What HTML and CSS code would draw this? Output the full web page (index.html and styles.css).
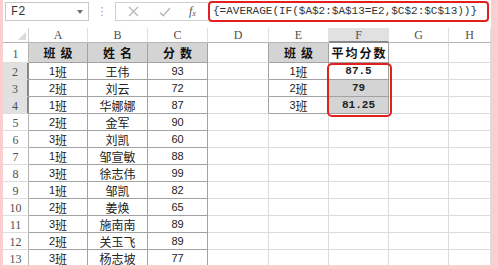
FILE: index.html
```html
<!DOCTYPE html>
<html lang="zh">
<head>
<meta charset="utf-8">
<title>AVERAGE IF</title>
<link rel="stylesheet" href="styles.css">
</head>
<body>
<div class="frame">
  <div class="app">
    <div class="fbar">
      <div class="namebox"><span class="nb-text">F2</span><span class="nb-arrow"></span></div>
      <div class="dots">⋮</div>
      <div class="btns">
        <svg class="ic" width="11" height="11" viewBox="0 0 11 11"><path d="M1 1L10 10M10 1L1 10" stroke="#b4b4b4" stroke-width="1.2" fill="none"/></svg>
        <svg class="ic" width="12" height="10" viewBox="0 0 12 10"><path d="M1 5.5L4.2 8.8L11 1" stroke="#b4b4b4" stroke-width="1.3" fill="none"/></svg>
        <span class="fx">f<sub>x</sub></span>
      </div>
      <div class="formula">{=AVERAGE(IF($A$2:$A$13=E2,$C$2:$C$13))}</div>
    </div>
    <div class="sheet">
      <div class="grid">
        <div class="c corner"><span class="tri"></span></div>
        <div class="c ch">A</div><div class="c ch">B</div><div class="c ch">C</div><div class="c ch">D</div><div class="c ch">E</div><div class="c ch selc">F</div><div class="c ch">G</div><div class="c ch">H</div>

        <div class="c rh r1">1</div>
        <div class="c t th">班级</div><div class="c t th">姓名</div><div class="c t th">分数</div><div class="c tl"></div><div class="c t th">班级</div><div class="c t th th4">平均分数</div><div class="c"></div><div class="c"></div>

        <div class="c rh selr">2</div>
        <div class="c t cls"><span class="d">1</span>班</div><div class="c t nm">王伟</div><div class="c t num">93</div><div class="c tl"></div><div class="c t cls"><span class="d">1</span>班</div><div class="c t res">87.5</div><div class="c"></div><div class="c"></div>

        <div class="c rh selr">3</div>
        <div class="c t cls"><span class="d">2</span>班</div><div class="c t nm">刘云</div><div class="c t num">72</div><div class="c tl"></div><div class="c t cls"><span class="d">2</span>班</div><div class="c t res hl">79</div><div class="c"></div><div class="c"></div>

        <div class="c rh selr">4</div>
        <div class="c t cls"><span class="d">1</span>班</div><div class="c t nm">华娜娜</div><div class="c t num">87</div><div class="c tl"></div><div class="c t cls"><span class="d">3</span>班</div><div class="c t res hl">81.25</div><div class="c"></div><div class="c"></div>

        <div class="c rh">5</div>
        <div class="c t cls"><span class="d">2</span>班</div><div class="c t nm">金军</div><div class="c t num">90</div><div class="c"></div><div class="c"></div><div class="c"></div><div class="c"></div><div class="c"></div>

        <div class="c rh">6</div>
        <div class="c t cls"><span class="d">3</span>班</div><div class="c t nm">刘凯</div><div class="c t num">60</div><div class="c"></div><div class="c"></div><div class="c"></div><div class="c"></div><div class="c"></div>

        <div class="c rh">7</div>
        <div class="c t cls"><span class="d">1</span>班</div><div class="c t nm">邹宣敏</div><div class="c t num">88</div><div class="c"></div><div class="c"></div><div class="c"></div><div class="c"></div><div class="c"></div>

        <div class="c rh">8</div>
        <div class="c t cls"><span class="d">3</span>班</div><div class="c t nm">徐志伟</div><div class="c t num">99</div><div class="c"></div><div class="c"></div><div class="c"></div><div class="c"></div><div class="c"></div>

        <div class="c rh">9</div>
        <div class="c t cls"><span class="d">1</span>班</div><div class="c t nm">邹凯</div><div class="c t num">82</div><div class="c"></div><div class="c"></div><div class="c"></div><div class="c"></div><div class="c"></div>

        <div class="c rh">10</div>
        <div class="c t cls"><span class="d">2</span>班</div><div class="c t nm">姜焕</div><div class="c t num">65</div><div class="c"></div><div class="c"></div><div class="c"></div><div class="c"></div><div class="c"></div>

        <div class="c rh">11</div>
        <div class="c t cls"><span class="d">3</span>班</div><div class="c t nm">施南南</div><div class="c t num">89</div><div class="c"></div><div class="c"></div><div class="c"></div><div class="c"></div><div class="c"></div>

        <div class="c rh">12</div>
        <div class="c t cls"><span class="d">2</span>班</div><div class="c t nm">关玉飞</div><div class="c t num">89</div><div class="c"></div><div class="c"></div><div class="c"></div><div class="c"></div><div class="c"></div>

        <div class="c rh">13</div>
        <div class="c t cls"><span class="d">3</span>班</div><div class="c t nm">杨志坡</div><div class="c t num">77</div><div class="c"></div><div class="c"></div><div class="c"></div><div class="c"></div><div class="c"></div>
      </div>
      <div class="ring"></div>
    </div>
  </div>
</div>
</body>
</html>
```

FILE: styles.css
```css
* { box-sizing: border-box; }
html, body { margin: 0; padding: 0; background: #ffffff; }
body { width: 498px; height: 269px; overflow: hidden; }

.frame {
  width: 498px;
  height: 269px;
  background: #fbcfcf;
  padding: 0 7px 4px 3px;
}
.app {
  width: 488px;
  height: 265px;
  background: #ffffff;
  overflow: hidden;
}

/* formula bar */
.fbar {
  height: 28px;
  display: flex;
  align-items: flex-start;
  padding: 2px 0 0 2px;
}
.namebox {
  width: 84px;
  height: 19px;
  border: 1px solid #c8c8c8;
  display: flex;
  align-items: center;
  justify-content: space-between;
  padding: 0 5px 0 5px;
  font-family: "Liberation Mono", monospace;
  font-size: 12px;
  color: #333;
}
.nb-arrow {
  width: 0; height: 0;
  border-left: 3px solid transparent;
  border-right: 3px solid transparent;
  border-top: 4px solid #707070;
}
.dots {
  width: 26px;
  text-align: center;
  color: #9a9a9a;
  font-family: "DejaVu Sans", sans-serif;
  font-size: 11px;
  line-height: 19px;
}
.btns {
  width: 93px;
  height: 19px;
  border: 1px solid #d0d0d0;
  border-right: none;
  display: flex;
  align-items: center;
  padding-left: 12px;
  gap: 0;
}
.btns .ic:first-child { margin-right: 20px; }
.btns .ic:nth-child(2) { margin-right: 18px; }
.fx {
  font-family: "Liberation Serif", serif;
  font-style: italic;
  font-size: 12px;
  color: #555;
  line-height: 1;
}
.fx sub { font-size: 8px; vertical-align: -1px; }
.formula {
  width: 281px;
  height: 21px;
  margin-top: -1px;
  border: 2px solid #e2201f;
  border-radius: 4px;
  font-family: "Liberation Mono", monospace;
  font-size: 11px;
  color: #333;
  line-height: 17px;
  padding-left: 3px;
  white-space: nowrap;
  overflow: hidden;
}

/* sheet */
.sheet {
  position: relative;
  height: 237px;
  overflow: hidden;
}
.grid {
  display: grid;
  grid-template-columns: 26px 59px 60px 60px 61px 60px 60px 60px 42px;
  grid-template-rows: 15px 20px repeat(13, 17px);
}
.c {
  border-right: 1px solid #dcdcdc;
  border-bottom: 1px solid #dcdcdc;
  display: flex;
  align-items: center;
  justify-content: center;
  white-space: nowrap;
  overflow: hidden;
  font-family: "Liberation Sans", "Noto Sans CJK SC", sans-serif;
  font-size: 12px;
  color: #222;
}
.corner {
  position: relative;
  border-right: 1px solid #cfcfcf;
  border-bottom: 1px solid #b5b5b5;
}
.tri {
  position: absolute;
  right: 2px;
  bottom: 2px;
  width: 0; height: 0;
  border-left: 8px solid transparent;
  border-bottom: 8px solid #dadada;
}
.ch {
  font-family: "Liberation Serif", serif;
  font-size: 12px;
  color: #505050;
  border-right: 1px solid #e0e0e0;
  border-bottom: 1px solid #b5b5b5;
  padding-top: 1px;
}
.selc {
  background: #e1e1e1;
  border-bottom: 2px solid #888888;
}
.rh {
  font-family: "Liberation Serif", serif;
  font-size: 12px;
  color: #505050;
  border-right: 1px solid #b5b5b5;
  border-bottom: 1px solid #dedede;
  align-items: flex-end;
  padding-bottom: 0;
  line-height: 14px;
}
.rh.r1 { padding-bottom: 1px; }
.selr {
  background: #e1e1e1;
  border-right: 2px solid #888888;
}
.t {
  border-right: 1px solid #a2a2a2;
  border-bottom: 1px solid #a2a2a2;
}
.tl { border-right: 1px solid #a2a2a2; }
.th {
  background: #d4d4d4;
  font-family: "Noto Sans CJK SC", sans-serif;
  font-weight: 700;
  font-size: 12px;
  letter-spacing: 5px;
  padding-left: 5px;
  color: #111;
}
.th4 {
  background: #ffffff;
  letter-spacing: 2px;
  padding-left: 2px;
  font-size: 12px;
}
.cls {
  font-family: "Noto Sans CJK SC", sans-serif;
  font-size: 12px;
}
.cls .d { font-family: "Liberation Sans", sans-serif; font-size: 11px; }
.nm {
  font-family: "Noto Sans CJK SC", sans-serif;
  font-size: 12px;
  font-weight: 400;
}
.num {
  font-family: "Liberation Sans", sans-serif;
  font-size: 11px;
}
.res {
  font-family: "Liberation Mono", monospace;
  font-size: 11px;
  font-weight: 700;
}
.hl { background: #d4d4d4; }

.ring {
  position: absolute;
  left: 324px;
  top: 35px;
  width: 65px;
  height: 54px;
  border: 2px solid #e2201f;
  border-radius: 5px;
  pointer-events: none;
}
```
